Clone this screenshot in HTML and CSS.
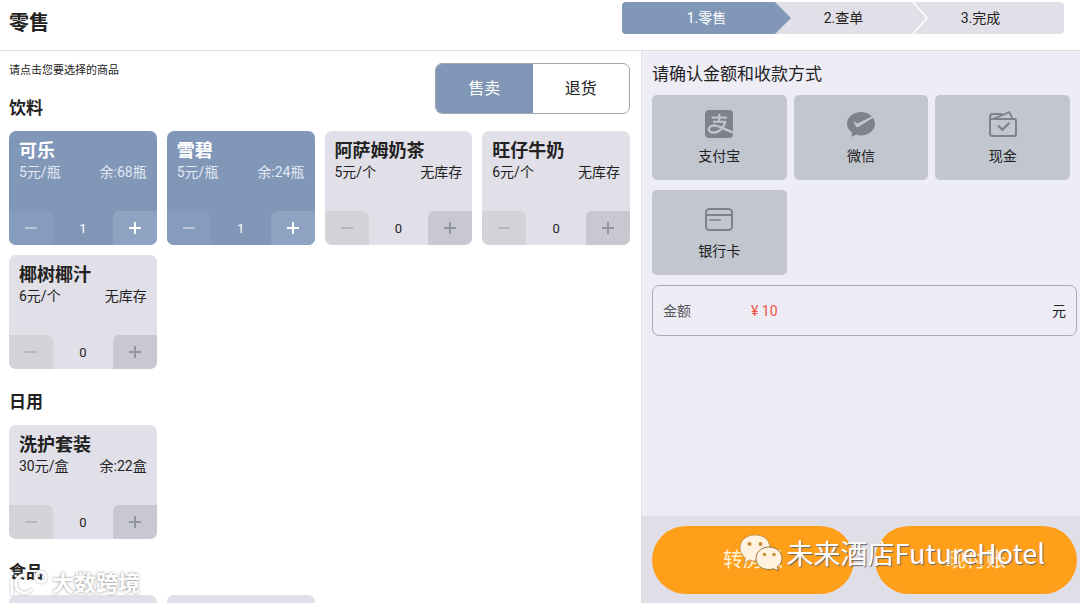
FILE: index.html
```html
<!DOCTYPE html>
<html lang="zh-CN">
<head>
    <meta charset="UTF-8">
    <meta name="viewport" content="width=device-width, initial-scale=1.0">
    <title>零售</title>
    <link rel="stylesheet" href="styles.css">
</head>
<body>
    <header class="header">
        <h1>零售</h1>
        <ol class="steps">
            <li class="step active">1.零售</li>
            <li class="step">2.查单</li>
            <li class="step">3.完成</li>
        </ol>
    </header>

    <div class="content">
        <main class="goods">
            <div class="goods-top">
                <div>
                    <p class="hint">请点击您要选择的商品</p>
                    <h2 class="category">饮料</h2>
                </div>
                <div class="switch">
                    <button type="button" class="on">售卖</button>
                    <button type="button">退货</button>
                </div>
            </div>
            <div class="grid">
                <div class="card selected">
                    <h3>可乐</h3>
                    <p class="meta"><span>5元/瓶</span><span>余:68瓶</span></p>
                    <div class="counter">
                        <button type="button" class="minus" aria-label="减少"></button>
                        <output>1</output>
                        <button type="button" class="plus" aria-label="增加"></button>
                    </div>
                </div>
                <div class="card selected">
                    <h3>雪碧</h3>
                    <p class="meta"><span>5元/瓶</span><span>余:24瓶</span></p>
                    <div class="counter">
                        <button type="button" class="minus" aria-label="减少"></button>
                        <output>1</output>
                        <button type="button" class="plus" aria-label="增加"></button>
                    </div>
                </div>
                <div class="card">
                    <h3>阿萨姆奶茶</h3>
                    <p class="meta"><span>5元/个</span><span>无库存</span></p>
                    <div class="counter">
                        <button type="button" class="minus" aria-label="减少"></button>
                        <output>0</output>
                        <button type="button" class="plus" aria-label="增加"></button>
                    </div>
                </div>
                <div class="card">
                    <h3>旺仔牛奶</h3>
                    <p class="meta"><span>6元/个</span><span>无库存</span></p>
                    <div class="counter">
                        <button type="button" class="minus" aria-label="减少"></button>
                        <output>0</output>
                        <button type="button" class="plus" aria-label="增加"></button>
                    </div>
                </div>
                <div class="card">
                    <h3>椰树椰汁</h3>
                    <p class="meta"><span>6元/个</span><span>无库存</span></p>
                    <div class="counter">
                        <button type="button" class="minus" aria-label="减少"></button>
                        <output>0</output>
                        <button type="button" class="plus" aria-label="增加"></button>
                    </div>
                </div>
            </div>

            <h2 class="category">日用</h2>
            <div class="grid">
                <div class="card">
                    <h3>洗护套装</h3>
                    <p class="meta"><span>30元/盒</span><span>余:22盒</span></p>
                    <div class="counter">
                        <button type="button" class="minus" aria-label="减少"></button>
                        <output>0</output>
                        <button type="button" class="plus" aria-label="增加"></button>
                    </div>
                </div>
            </div>

            <h2 class="category">食品</h2>
            <div class="grid">
                <div class="card"></div>
                <div class="card"></div>
            </div>
        </main>

        <aside class="pay">
            <div class="pay-body">
                <h2>请确认金额和收款方式</h2>
                <div class="methods">
                    <button type="button">
                        <svg viewBox="0 0 28 28">
                            <rect width="28" height="28" rx="4" fill="#7d828c"/>
                            <g fill="none" stroke="#c2c6cf" stroke-width="2">
                                <path d="M6.5 7.6H22M14.3 3.8V12M8 11.8H20.6"/>
                                <path d="M20.4 11.2C19 16.5 15 22.6 8.6 22.6C5.2 22.6 3.6 20.8 3.8 18.8C4.2 15.8 8 14.8 12 16C17 17.5 22 20.2 28.5 22.6" stroke-width="2.3"/>
                            </g>
                        </svg>
                        支付宝
                    </button>
                    <button type="button">
                        <svg viewBox="0 0 28 28">
                            <path d="M14 2C6.3 2 0 7.2 0 13.8C0 17.4 2 20.5 5 22.7L4.6 26.8L9.2 24.7C10.7 25.2 12.3 25.5 14 25.5C21.7 25.5 28 20.4 28 13.8C28 7.2 21.7 2 14 2Z" fill="#7d828c"/>
                            <path d="M6.2 10.8L10.6 13.6L25.5 6L26.4 7.6L11 17.2L9.2 17Z" fill="#c2c6cf"/>
                        </svg>
                        微信
                    </button>
                    <button type="button">
                        <svg viewBox="0 0 28 28" fill="none" stroke="#7d828c" stroke-width="2">
                            <path d="M1 24V7C1 5 2 4 4 4H13M1 9H25.5C26.5 9 27 9.5 27 10.5V23.5C27 25 26.5 26 25 26H3.5C2 26 1 25 1 23.5Z"/>
                            <path d="M5 8.5L20.5 2.2L23.5 9" stroke-width="1.8"/>
                            <path d="M9 15.5L13.3 19.8L20.5 12.7" stroke-width="2.2"/>
                        </svg>
                        现金
                    </button>
                    <button type="button">
                        <svg viewBox="0 0 28 28" fill="none" stroke="#7d828c" stroke-width="2">
                            <rect x="1" y="4" width="26" height="21" rx="3.5"/>
                            <path d="M1 10H27"/>
                            <path d="M4 15H16" stroke-width="1.5"/>
                        </svg>
                        银行卡
                    </button>
                </div>
                <div class="amount">
                    <label for="amount">金额</label>
                    <input type="text" id="amount" value="¥ 10">
                    <span>元</span>
                </div>
            </div>
            <div class="pay-footer">
                <button type="button">转房账</button>
                <button type="button">现付账</button>
            </div>
        </aside>
    </div>

    <div class="mark mark-right">
        <svg width="44" height="38" viewBox="0 0 44 38">
            <path d="M16 1C7 1 1 6.5 1 14C1 18 3 21.5 6.5 24L5 29L10.5 26C12 26.6 14 27 16 27C25 27 31 21 31 14C31 6.5 25 1 16 1Z" fill="#fff3e0" stroke="#9a7440" stroke-width="0.6"/>
            <circle cx="10.5" cy="10" r="2" fill="#c98a35"/>
            <circle cx="21.5" cy="10" r="2" fill="#c98a35"/>
            <path d="M30 13C22.5 13 17 18 17 24.500C17 31 22.5 35.5 30 35.5C31.5 35.5 33 35.2 34.5 34.8L39.5 37L38.3 32.8C41 30.8 43 28 43 24.5C43 18 37.5 13 30 13Z" fill="#fff3e0" stroke="#9a7440" stroke-width="1"/>
            <circle cx="25.5" cy="20.5" r="1.7" fill="#c98a35"/>
            <circle cx="35" cy="20.5" r="1.7" fill="#c98a35"/>
        </svg>
        <span>未来酒店FutureHotel</span>
    </div>
    <div class="mark mark-left">
        <svg width="40" height="30" viewBox="0 0 40 30" fill="none" stroke="#fff" stroke-width="3">
            <path d="M3 10V26M3 3V6"/>
            <path d="M17 6A9 9 0 1 0 23 20"/>
            <circle cx="32" cy="8" r="5"/>
        </svg>
        <span>大数跨境</span>
    </div>
</body>
</html>
```
FILE: styles.css
```css
* {
    box-sizing: border-box;
}
body {
    margin: 0;
    height: 100vh;
    display: flex;
    flex-direction: column;
    overflow: hidden;
    position: relative;
    background: #fff;
    color: #222;
    font-family: Roboto, "Noto Sans CJK SC", sans-serif;
    font-size: 14px;
    line-height: 20px;
}
h1, h2, h3, p, ol {
    margin: 0;
    padding: 0;
}
button, input {
    font: inherit;
    color: inherit;
    border: none;
    padding: 0;
    background: none;
}
button {
    cursor: pointer;
}

/* header */
.header {
    display: flex;
    justify-content: space-between;
    align-items: flex-start;
    padding: 2px 16px 0 9px;
    height: 51px;
    flex-shrink: 0;
    border-bottom: 1px solid #e0e0e0;
}
.header h1 {
    font-size: 20px;
    line-height: 42px;
}
.steps {
    display: flex;
    list-style: none;
    padding-right: 15px;
    border-radius: 4px;
    overflow: hidden;
    background: #e1e0e8;
}
.step {
    position: relative;
    width: 137px;
    line-height: 32px;
    text-align: center;
}
.step.active {
    box-sizing: content-box;
    padding-left: 16px;
    background: #8097b8;
    color: #fff;
}
.step::after {
    content: "";
    position: absolute;
    z-index: 1;
    top: 0;
    left: 100%;
    width: 16px;
    height: 100%;
    background: #fff;
    clip-path: polygon(0 0, 2px 0, 100% 50%, 2px 100%, 0 100%, 14px 50%);
}
.step.active::after {
    background: #8097b8;
    clip-path: polygon(0 0, 100% 50%, 0 100%);
}
.step:last-child::after {
    display: none;
}

.content {
    flex: 1;
    min-height: 0;
    display: grid;
    grid-template-columns: minmax(0, 1fr) 439px;
}

/* goods */
.goods {
    padding: 0 11px 20px 9px;
    overflow-y: auto;
    scrollbar-width: none;
}
.goods-top {
    display: flex;
    justify-content: space-between;
    align-items: flex-start;
    padding-top: 12px;
}
.hint {
    font-size: 11px;
    line-height: 15px;
}
.category {
    padding: 21px 0 11px;
    font-size: 17px;
    line-height: 24px;
}
.goods-top .category {
    padding-top: 18px;
}
.switch {
    display: flex;
    width: 195px;
    height: 51px;
    border: 1px solid #a0a5ae;
    border-radius: 7px;
    overflow: hidden;
}
.switch button {
    flex: 1;
    font-size: 16px;
}
.switch .on {
    background: #8097b8;
    color: #fff;
}
.grid {
    display: grid;
    grid-template-columns: repeat(4, 1fr);
    gap: 10px;
}
.card {
    display: flex;
    flex-direction: column;
    height: 114px;
    padding-top: 8px;
    border-radius: 7px;
    overflow: hidden;
    background: #e1e0e8;
}
.card h3 {
    padding: 0 10px;
    font-size: 18px;
    line-height: 23px;
}
.meta {
    display: flex;
    justify-content: space-between;
    padding: 0 10px;
    line-height: 20px;
}
.counter {
    display: flex;
    justify-content: space-between;
    align-items: stretch;
    height: 34px;
    margin-top: auto;
    font-size: 13px;
    line-height: 36px;
}
.counter button {
    position: relative;
    width: 44px;
    color: #93959c;
}
.minus {
    background: #d3d3da;
    border-radius: 0 6px 0 0;
}
.plus {
    background: #c8c8d0;
    border-radius: 6px 0 0 0;
}
.counter button::before,
.plus::after {
    content: "";
    position: absolute;
    inset: 0;
    margin: auto;
    width: 12px;
    height: 2px;
    background: currentColor;
}
.plus::after {
    width: 2px;
    height: 12px;
}
.card .minus::before {
    background: #b6b7bd;
}
.card.selected {
    background: #8097b8;
    color: #fff;
}
.selected .meta {
    color: #e3e9f2;
}
.selected .minus {
    background: #869cbc;
}
.selected .plus {
    background: #8ea3c1;
    color: #fff;
}
.card.selected .minus::before {
    background: #b9c6d9;
}

/* payment */
.pay {
    display: flex;
    flex-direction: column;
    border-left: 1px solid #e0e0e4;
    background: #eeedf6;
}
.pay-body {
    flex: 1;
    padding: 11px 3px 0 10px;
}
.pay-body h2 {
    font-size: 17px;
    font-weight: normal;
    line-height: 24px;
}
.methods {
    display: grid;
    grid-template-columns: repeat(3, 1fr);
    gap: 10px 7px;
    margin: 9px 7px 10px 0;
}
.methods button {
    display: flex;
    flex-direction: column;
    align-items: center;
    gap: 8px;
    height: 85px;
    padding-top: 15px;
    border-radius: 5px;
    background: #c2c6cf;
}
.methods svg {
    width: 28px;
    height: 28px;
}
.amount {
    display: flex;
    align-items: center;
    height: 51px;
    padding: 0 10px;
    border: 1px solid #a9a8b4;
    border-radius: 7px;
}
.amount label {
    width: 88px;
    color: #555;
}
.amount input {
    flex: 1;
    min-width: 0;
    color: #f0523f;
}
.pay-footer {
    display: flex;
    gap: 21px;
    padding: 10px 3px 9px 10px;
    background: #e0dfe7;
}
.pay-footer button {
    flex: 1;
    height: 68px;
    border-radius: 34px;
    background: #ff9f1a;
    color: #fff0d8;
    font-size: 20px;
}

/* watermarks */
.mark {
    position: absolute;
    z-index: 2;
    display: flex;
    align-items: center;
    color: #fff;
    pointer-events: none;
}
.mark-right {
    right: 35px;
    bottom: 31px;
    gap: 4px;
    font-family: "Noto Sans CJK SC", sans-serif;
    font-size: 27px;
    line-height: 38px;
    text-shadow: 1px 1px 1px #666;
}
.mark-left {
    left: 9px;
    bottom: 4px;
    gap: 3px;
    font-size: 22px;
    font-weight: bold;
    line-height: 30px;
    text-shadow: 0 0 3px #888;
}
.mark-left svg {
    filter: drop-shadow(0 0 1px #aaa);
}
```
